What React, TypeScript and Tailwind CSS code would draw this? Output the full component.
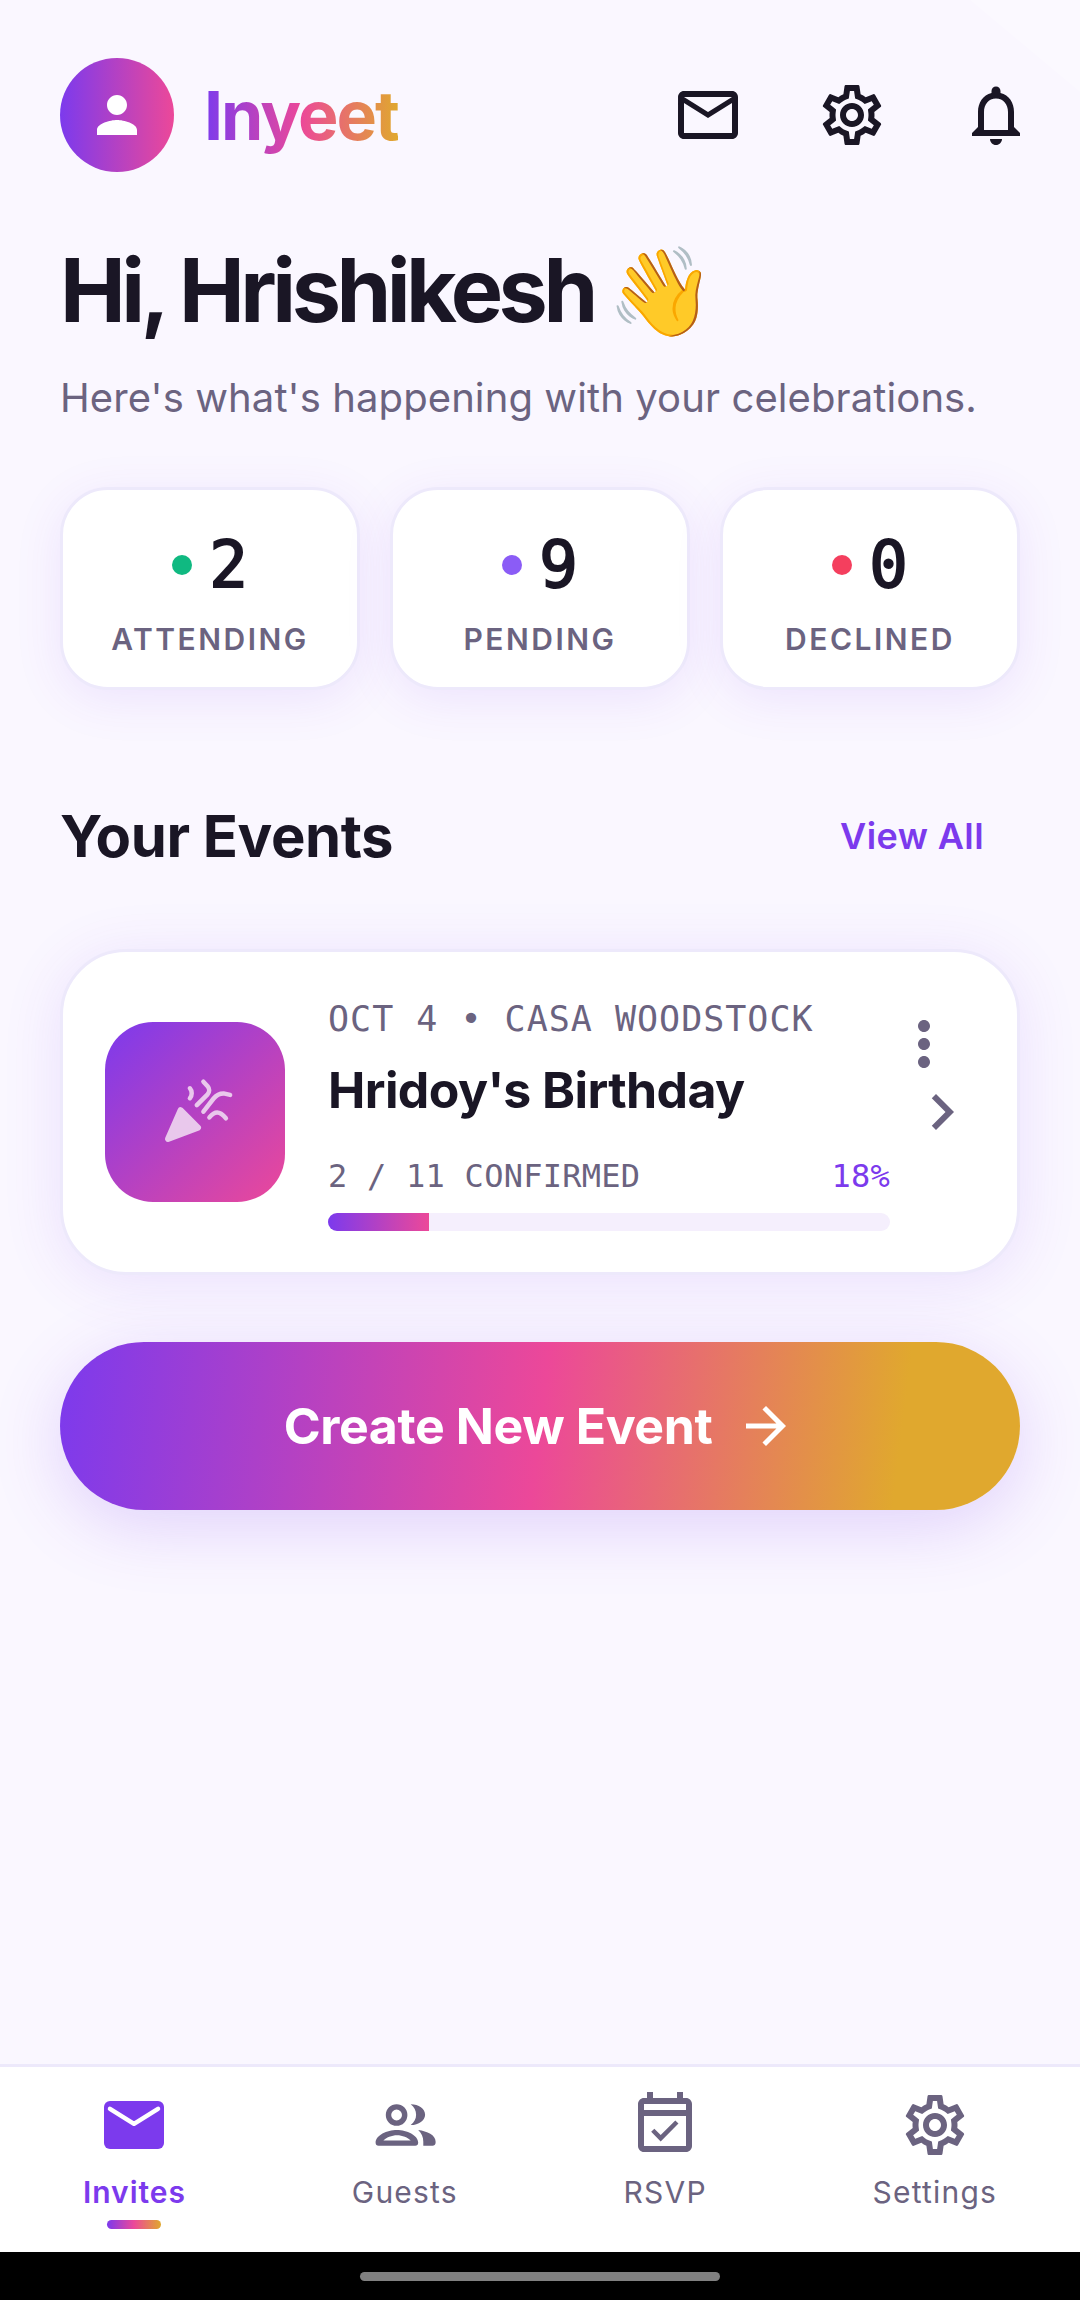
import { MdArrowForward, MdChevronRight, MdMoreVert, MdNotificationsNone, MdOutlineEventAvailable, MdOutlineMailOutline, MdOutlineSettings, MdPerson } from 'react-icons/md';

const stats = [
  { value: '2', label: 'ATTENDING', dot: 'bg-[#10b981]' },
  { value: '9', label: 'PENDING', dot: 'bg-[#8b5cf6]' },
  { value: '0', label: 'DECLINED', dot: 'bg-[#f43f5e]' },
];

function MailFilled() {
  return (
    <svg viewBox="0 0 24 24" className="w-[72px] h-[72px]">
      <rect x="2" y="4" width="20" height="16" rx="2" fill="#7c3aed" />
      <path d="M4 6.6 12 11.6 20 6.6" fill="none" stroke="#fff" strokeWidth="1.5" strokeLinecap="round" strokeLinejoin="round" />
    </svg>
  );
}

function GuestsIcon() {
  return (
    <svg viewBox="0 0 24 24" className="w-[72px] h-[72px]" fill="currentColor" fillRule="evenodd">
      <path d="M9.2 5.07a3.6 3.6 0 1 0 0 7.2 3.6 3.6 0 0 0 0-7.2zm0 1.8a1.8 1.8 0 1 1 0 3.6 1.8 1.8 0 0 1 0-3.6z" />
      <path d="M3.2 18.9c-.6 0-1-.4-1-1 0-2.4 3.8-4.2 7.1-4.2s7.1 1.8 7.1 4.2c0 .6-.4 1-1 1H3.2zm1.6-1.7h9.1c-.9-1-2.8-1.8-4.55-1.8s-3.65.8-4.55 1.8z" />
      <path d="M13.9 5.1c2.7 0 4.8 1.5 4.8 3.45S16.6 12 13.9 12c1.2-1 1.8-2.1 1.8-3.45S15.1 6.1 13.9 5.1z" />
      <path d="M16.4 13.7c3 .4 5.8 1.7 5.8 3.8v.4c0 .6-.5 1-1 1h-3.1v-1.3c0-1.6-.6-2.9-1.7-3.9z" />
    </svg>
  );
}

function PartyIcon() {
  return (
    <svg viewBox="0 0 24 24" className="w-[72px] h-[72px] overflow-visible" fill="none" stroke="#e9c8ec" strokeWidth="1.5" strokeLinecap="round" strokeLinejoin="round">
      <path d="M3 21 7.2 11.4 13 17.2z" fill="#e9c8ec" strokeWidth="2" />
      <path d="M10.3 4.1c.8.9.8 2.4 0 3.3" />
      <path d="M14.8 1.9l1.4 1.5c.7.8.7 1.9 0 2.7l-3.6 3.6" />
      <path d="M14.8 11.9l3.4-4.4c.8-1 1.9-1.7 3.3-1.7l2.2.5" />
      <path d="M16.8 13.8c1-1.2 1.8-1.6 2.6-1.6s1.7.5 2.9 1.9" />
    </svg>
  );
}

export default function App() {
  return (
    <div className="relative w-[1080px] h-[2300px] flex flex-col overflow-hidden bg-[#faf7ff] font-['Inter',sans-serif] text-[#1a1625]">
      <div className="absolute right-0 top-0 w-[110px] h-[92px] bg-white/25 [clip-path:polygon(0_0,100%_0,100%_100%)]" />
      <div className="flex-1 px-[60px] pt-[58px]">
        <div className="flex items-center">
          <div className="w-[114px] h-[114px] rounded-full flex items-center justify-center bg-linear-to-r/srgb from-[#7c3aed] to-[#ec4899]">
            <MdPerson className="text-white w-[60px] h-[60px]" />
          </div>
          <div className="ml-[30px] text-[68px] leading-[90px] font-bold tracking-[-2px] bg-linear-to-r/srgb from-[#7c3aed] via-[#ec4899] to-[#e0a82e] bg-clip-text text-transparent">
            Inyeet
          </div>
          <div className="ml-auto mr-[-12px] flex items-center gap-[72px]">
            <MdOutlineMailOutline className="w-[72px] h-[72px]" />
            <MdOutlineSettings className="w-[72px] h-[72px]" />
            <MdNotificationsNone className="w-[72px] h-[72px]" />
          </div>
        </div>

        <h1 className="mt-[63px] h-[110px] text-[88px] leading-[110px] font-bold tracking-[-4.5px]">
          Hi, Hrishikesh <span className="ml-[-3px] text-[87px] leading-none">👋</span>
        </h1>
        <p className="mt-[25px] text-[40px] leading-[56px] tracking-[0.1px] text-[#6b6380]">
          Here's what's happening with your celebrations.
        </p>

        <div className="mt-[61px] grid grid-cols-3 gap-[30px]">
          {stats.map((s) => (
            <div key={s.label} className="h-[203px] rounded-[48px] bg-white border-[3px] border-[#ede9fb] shadow-[0_10px_48px_rgba(124,58,237,0.1)] flex flex-col items-center pt-[35px]">
              <div className="flex items-center gap-[17px]">
                <span className={`w-[20px] h-[20px] rounded-full ${s.dot}`} />
                <span className="font-['DejaVu_Sans_Mono',monospace] text-[64px] leading-[80px] [-webkit-text-stroke:2px_#1a1625]">{s.value}</span>
              </div>
              <div className="mt-[14px] text-[30px] leading-[40px] font-semibold tracking-[2.5px] text-[#6b6380]">{s.label}</div>
            </div>
          ))}
        </div>

        <div className="mt-[106px] flex items-center justify-between">
          <h2 className="text-[58px] leading-[80px] font-bold tracking-[-0.45px]">Your Events</h2>
          <span className="mr-[36px] text-[36px] leading-[50px] font-semibold tracking-[0.4px] text-[#7c3aed]">View All</span>
        </div>

        <div className="mt-[73px] h-[326px] rounded-[66px] bg-white border-[3px] border-[#ede9fb] shadow-[0_8px_60px_rgba(124,58,237,0.12)] flex pl-[42px]">
          <div className="self-center w-[180px] h-[180px] shrink-0 rounded-[48px] flex items-center justify-center bg-linear-135/srgb from-[#7c3aed] to-[#ec4899]">
            <PartyIcon />
          </div>
          <div className="ml-[43px] mt-[47px] w-[562px] shrink-0">
            <div className="font-['DejaVu_Sans_Mono',monospace] text-[35px] leading-[40px] tracking-[1px] text-[#6b6380] whitespace-nowrap">OCT 4 • CASA WOODSTOCK</div>
            <div className="mt-[17px] text-[50px] leading-[68px] font-bold tracking-[-0.6px]">Hridoy's Birthday</div>
            <div className="mt-[32px] flex justify-between font-['DejaVu_Sans_Mono',monospace] text-[32px] leading-[40px] tracking-[0.25px] text-[#6b6380]">
              <span>2 / 11 CONFIRMED</span>
              <span className="text-[#7c3aed]">18%</span>
            </div>
            <div className="mt-[17px] h-[18px] rounded-full overflow-hidden bg-[#f5effd]">
              <div className="h-full w-[18%] bg-linear-to-r/srgb from-[#7c3aed] to-[#ec4899]" />
            </div>
          </div>
          <div className="ml-[-2px] mt-[56px] flex flex-col">
            <MdMoreVert className="w-[72px] h-[72px] text-[#6b6380]" />
            <MdChevronRight className="w-[72px] h-[72px] mt-[-4px] ml-[18px] text-[#6b6380]" />
          </div>
        </div>

        <div className="mt-[67px] h-[168px] rounded-full flex items-center justify-center gap-[24px] text-white bg-linear-97/srgb from-[#7c3aed] via-[#ec4899] via-50% to-[#e0a82e] to-[87%] shadow-[0_16px_70px_rgba(124,58,237,0.2)]">
          <span className="text-[50px] font-bold tracking-[-0.4px]">Create New Event</span>
          <MdArrowForward className="w-[60px] h-[60px]" />
        </div>
      </div>

      <nav className="h-[188px] bg-white border-t-[3px] border-[#ede9fb] flex justify-around pt-[22px]">
        <div className="flex flex-col items-center">
          <MailFilled />
          <span className="mt-[11px] text-[30px] leading-[40px] font-semibold tracking-[1px] text-[#7c3aed]">Invites</span>
          <span className="mt-[8px] w-[54px] h-[9px] rounded-full bg-linear-to-r/srgb from-[#7c3aed] via-[#ec4899] to-[#e0a82e]" />
        </div>
        <div className="flex flex-col items-center text-[#6b6380]">
          <GuestsIcon />
          <span className="mt-[11px] text-[30px] leading-[40px] tracking-[1.2px]">Guests</span>
        </div>
        <div className="flex flex-col items-center text-[#6b6380]">
          <MdOutlineEventAvailable className="w-[72px] h-[72px]" />
          <span className="mt-[11px] text-[30px] leading-[40px] tracking-[1.2px]">RSVP</span>
        </div>
        <div className="flex flex-col items-center text-[#6b6380]">
          <MdOutlineSettings className="w-[72px] h-[72px]" />
          <span className="mt-[11px] text-[30px] leading-[40px] tracking-[1.2px]">Settings</span>
        </div>
      </nav>
      <div className="h-[48px] bg-black flex items-center justify-center">
        <div className="w-[360px] h-[9px] rounded-full bg-[#808080]" />
      </div>
    </div>
  );
}
